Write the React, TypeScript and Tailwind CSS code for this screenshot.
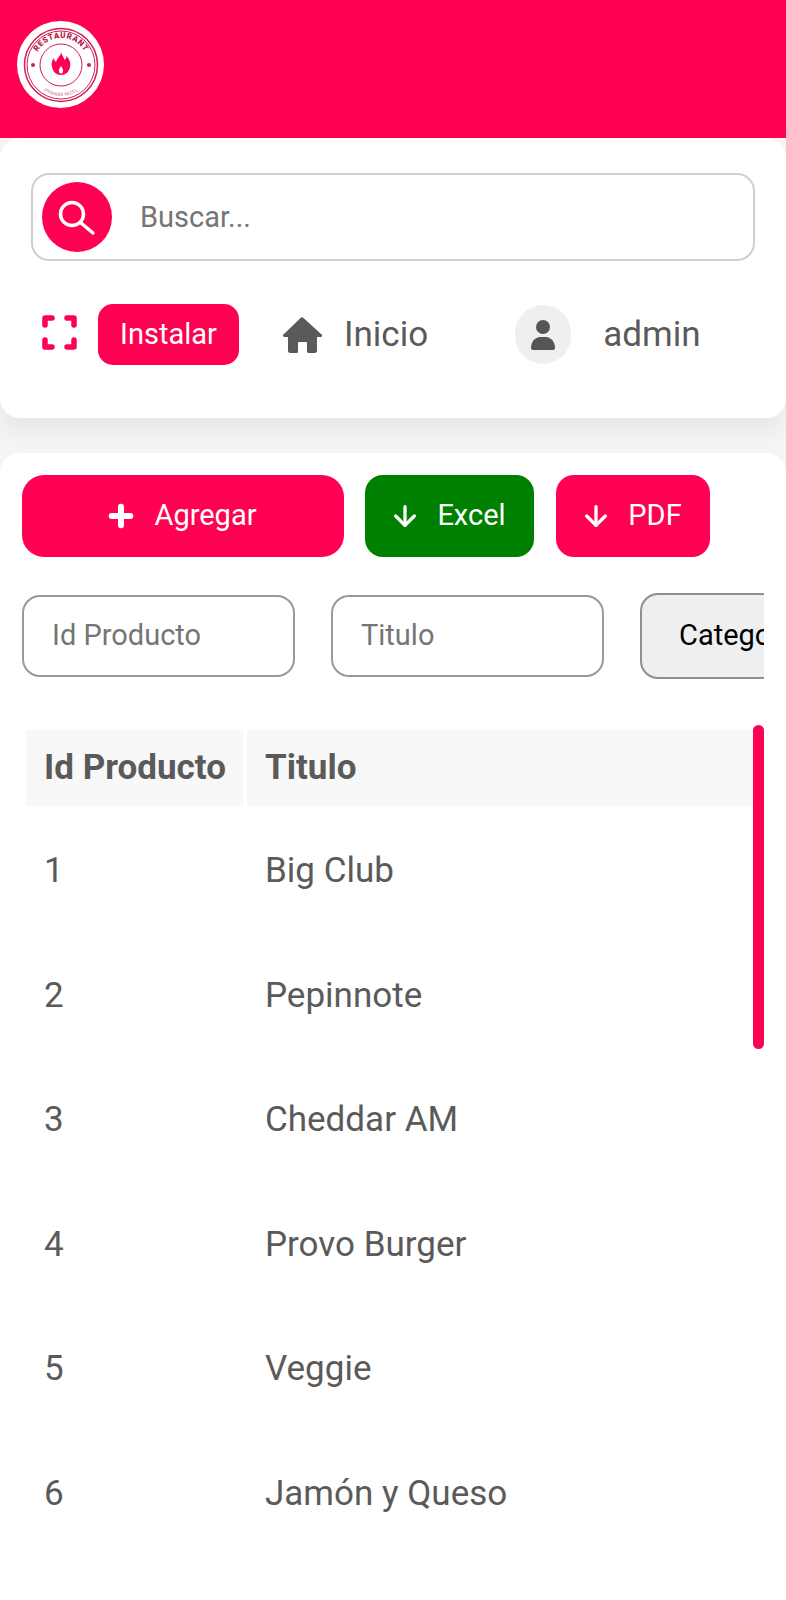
import { Plus, ArrowDown } from 'lucide-react';

const products = ['Big Club', 'Pepinnote', 'Cheddar AM', 'Provo Burger', 'Veggie', 'Jamón y Queso'];

function Logo() {
  return (
    <div className="w-[87px] h-[87px] rounded-full bg-white flex items-center justify-center">
      <svg width="76" height="76" viewBox="0 0 76 76">
        <defs>
          <path id="logoTop" d="M11 38a27 27 0 0 1 54 0" />
          <path id="logoBottom" d="M7 38a31 31 0 0 0 62 0" />
        </defs>
        <circle cx="38" cy="38" r="36.500" fill="none" stroke="#d01f55" strokeWidth="1.500" />
        <circle cx="38" cy="38" r="34" fill="none" stroke="#d01f55" strokeWidth="1" />
        <circle cx="38" cy="38" r="21" fill="none" stroke="#d01f55" strokeWidth="1" />
        <text fontSize="8" fontWeight="900" fill="#b8204c" fontFamily="Roboto, sans-serif" letterSpacing="0.6">
          <textPath href="#logoTop" startOffset="50%" textAnchor="middle">RESTAURANT</textPath>
        </text>
        <text fontSize="4.500" fill="#d9567c" fontFamily="Roboto, sans-serif" letterSpacing="0.4">
          <textPath href="#logoBottom" startOffset="50%" textAnchor="middle">IPPANER NICEL</textPath>
        </text>
        <circle cx="10" cy="38" r="2" fill="#d01f55" />
        <circle cx="66" cy="38" r="2" fill="#d01f55" />
        <path d="M38 25c1 4 3 5 3.500 8 1-1 2-2 2-4 3 3 4.500 7 3.500 11-1 5-4.500 8-9 8s-8-3-9-8c-1-3 0-7 2-9 0 2 1 3 2 4 1-4 4.500-6 5.500-10z" fill="#ff0052" />
        <path d="M38 39c1 2 2.500 3 2 5.500-.3 1.500-1 2-2 2s-1.700-.5-2-2c-.5-2.500 1-3.500 2-5.500z" fill="#fff" />
      </svg>
    </div>
  );
}

function SearchIcon() {
  return (
    <svg width="40" height="40" viewBox="0 0 40 40" fill="none" stroke="#fff" strokeWidth="3.500" strokeLinecap="round">
      <circle cx="15" cy="17" r="11.500" />
      <path d="M24 26l12 10" />
    </svg>
  );
}

function ExpandIcon() {
  return (
    <svg width="36" height="36" viewBox="0 0 36 36" fill="none" stroke="#ff0052" strokeWidth="5.500" strokeLinecap="round" strokeLinejoin="round">
      <path d="M3 10V3h7M25 3h7v7M32 25v7h-7M10 32H3v-7" />
    </svg>
  );
}

function HomeIcon() {
  return (
    <svg width="40" height="36" viewBox="0 0 40 36" fill="#5a5a5a">
      <path d="M18.500 1a2 2 0 0 1 3 0l17.500 16a1.500 1.500 0 0 1-1 3h-3v13.500a2.500 2.500 0 0 1-2.500 2.500h-6a1.500 1.500 0 0 1-1.500-1.500V26a1 1 0 0 0-1-1h-7a1 1 0 0 0-1 1v8.500a1.500 1.500 0 0 1-1.500 1.500h-6a2.500 2.500 0 0 1-2.500-2.500V20H3a1.500 1.500 0 0 1-1-3z" />
    </svg>
  );
}

function UserIcon() {
  return (
    <svg width="26" height="30" viewBox="0 0 26 30" fill="#555555">
      <circle cx="13" cy="7" r="7" />
      <path d="M1 28c0-6 4-11 9-11h6c5 0 9 5 9 11a2 2 0 0 1-2 2H3a2 2 0 0 1-2-2z" />
    </svg>
  );
}

export default function App() {
  return (
    <div className="w-[786px] h-[1600px] overflow-hidden bg-[#f5f5f5] font-['Roboto',sans-serif]">
      <header className="h-[138px] bg-[#ff0052] pl-[17px] pt-[21px]">
        <Logo />
      </header>

      <section className="h-[280px] bg-white rounded-[20px] pt-[35px] shadow-[0_14px_24px_rgba(0,0,0,0.06)]">
        <div className="mx-[31px] h-[88px] border-2 border-[#cfcfcf] rounded-[18px] flex items-center pl-[9px]">
          <div className="w-[70px] h-[70px] rounded-full bg-[#ff0052] flex items-center justify-center">
            <SearchIcon />
          </div>
          <span className="ml-[28px] mt-[2px] text-[29px] text-[#757575]">Buscar...</span>
        </div>

        <div className="mt-[43px] flex items-center pl-[42px]">
          <div className="-mt-[4px]"><ExpandIcon /></div>
          <button className="ml-[20px] w-[141px] h-[61px] rounded-[15px] bg-[#ff0052] text-white text-[29px]">Instalar</button>
          <div className="ml-[43px]"><HomeIcon /></div>
          <span className="ml-[22px] mt-[2px] text-[35px] text-[#5a5a5a]">Inicio</span>
          <div className="ml-[87px] w-[56px] h-[59px] rounded-full bg-[#f1eeee] flex items-center justify-center">
            <UserIcon />
          </div>
          <span className="ml-[32px] mt-[2px] text-[35px] text-[#5a5a5a]">admin</span>
        </div>
      </section>

      <section className="mt-[35px] h-[1200px] bg-white rounded-[20px] pt-[22px] pl-[22px]">
        <div className="flex">
          <button className="w-[322px] h-[82px] rounded-[22px] bg-[#ff0052] text-white text-[29px] pr-[4px] flex items-center justify-center gap-[17px]">
            <Plus size={32} strokeWidth={4.500} />
            Agregar
          </button>
          <button className="ml-[21px] w-[169px] h-[82px] rounded-[18px] bg-[#008000] text-white text-[29px] pr-[4px] flex items-center justify-center gap-[16px]">
            <ArrowDown size={32} strokeWidth={2.500} />
            Excel
          </button>
          <button className="ml-[22px] w-[154px] h-[82px] rounded-[18px] bg-[#ff0052] text-white text-[29px] pr-[4px] flex items-center justify-center gap-[16px]">
            <ArrowDown size={32} strokeWidth={2.500} />
            PDF
          </button>
        </div>

        <div className="mt-[36px] w-[742px] h-[86px] overflow-hidden flex items-center">
          <div className="shrink-0 w-[273px] h-[82px] border-2 border-[#999999] rounded-[18px] pl-[28px] flex items-center text-[29px] text-[#757575]">Id Producto</div>
          <div className="shrink-0 ml-[36px] w-[273px] h-[82px] border-2 border-[#999999] rounded-[18px] pl-[28px] flex items-center text-[29px] text-[#757575]">Titulo</div>
          <div className="shrink-0 ml-[36px] w-[200px] h-[86px] border-2 border-[#8f8f8f] rounded-[18px] bg-[#efefef] pl-[37px] flex items-center text-[29px] text-black">Categoria</div>
        </div>

        <div className="relative mt-[51px] w-[742px] pl-[4px]">
          <div className="flex h-[76px] gap-[4px] mb-[3px] text-[35px] font-bold text-[#5a5a5a]">
            <div className="w-[217px] bg-[#f8f8f8] pl-[18px] flex items-center">Id Producto</div>
            <div className="w-[507px] bg-[#f8f8f8] pl-[18px] flex items-center">Titulo</div>
          </div>
          {products.map((name, i) => (
            <div key={name} className="flex h-[124.6px] items-center text-[35px] text-[#5a5a5a]">
              <div className="w-[221px] pl-[18px]">{i + 1}</div>
              <div className="pl-[18px]">{name}</div>
            </div>
          ))}
          <div className="absolute left-[731px] top-[-5px] w-[11px] h-[324px] rounded-full bg-[#ff0052]" />
        </div>
      </section>
    </div>
  );
}
